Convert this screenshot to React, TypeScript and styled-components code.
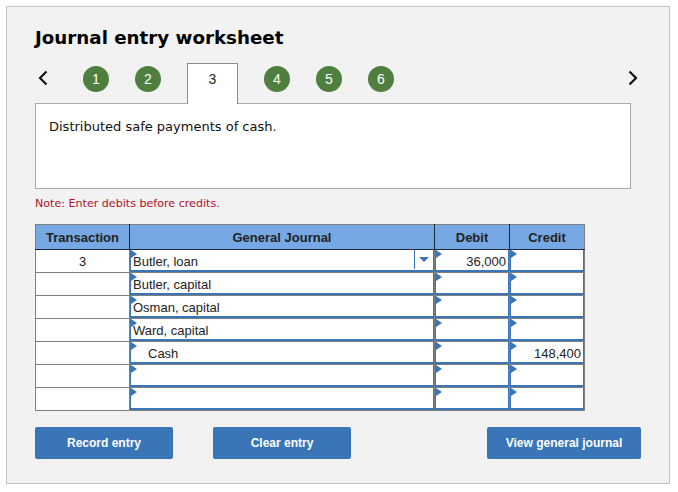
import styled, { createGlobalStyle } from 'styled-components';

const rows = [
  { transaction: '3', account: 'Butler, loan', debit: '36,000', credit: '', select: true },
  { transaction: '', account: 'Butler, capital', debit: '', credit: '' },
  { transaction: '', account: 'Osman, capital', debit: '', credit: '' },
  { transaction: '', account: 'Ward, capital', debit: '', credit: '' },
  { transaction: '', account: 'Cash', debit: '', credit: '148,400', indent: true },
  { transaction: '', account: '', debit: '', credit: '' },
  { transaction: '', account: '', debit: '', credit: '' },
];

function Chevron({ flip }: { flip?: boolean }) {
  return (
    <svg width="12" height="18" viewBox="0 0 12 18">
      <path
        d={flip ? 'M2.5 2.5L9 9l-6.5 6.5' : 'M9.5 2.5L3 9l6.5 6.5'}
        fill="none"
        stroke="#111"
        strokeWidth="2.2"
      />
    </svg>
  );
}

function App() {
  return (
    <>
      <GlobalStyle />
      <Panel>
        <Title>Journal entry worksheet</Title>
        <TabRow>
          <ArrowButton>
            <Chevron />
          </ArrowButton>
          <Steps>
            <Step>1</Step>
            <Step>2</Step>
            <ActiveStep>3</ActiveStep>
            <Step>4</Step>
            <Step>5</Step>
            <Step>6</Step>
          </Steps>
          <ArrowButton>
            <Chevron flip />
          </ArrowButton>
        </TabRow>
        <Description>Distributed safe payments of cash.</Description>
        <Note>Note: Enter debits before credits.</Note>
        <Table>
          <colgroup>
            <col width="94" />
            <col width="305" />
            <col width="75" />
            <col width="75" />
          </colgroup>
          <thead>
            <tr>
              <Th>Transaction</Th>
              <Th>General Journal</Th>
              <Th>Debit</Th>
              <Th>Credit</Th>
            </tr>
          </thead>
          <tbody>
            {rows.map((row, i) => (
              <tr key={i}>
                <PlainCell>{row.transaction}</PlainCell>
                <InputCell>
                  <Field $indent={row.indent}>
                    <Marker />
                    {row.account}
                    {row.select && (
                      <SelectArrow>
                        <Caret />
                      </SelectArrow>
                    )}
                  </Field>
                </InputCell>
                <InputCell>
                  <Field $right>
                    <Marker />
                    {row.debit}
                  </Field>
                </InputCell>
                <InputCell>
                  <Field $right>
                    <Marker />
                    {row.credit}
                  </Field>
                </InputCell>
              </tr>
            ))}
          </tbody>
        </Table>
        <Actions>
          <ActionGroup>
            <ActionButton $width={138}>Record entry</ActionButton>
            <ActionButton $width={138}>Clear entry</ActionButton>
          </ActionGroup>
          <ActionButton $width={154}>View general journal</ActionButton>
        </Actions>
      </Panel>
    </>
  );
}

const GlobalStyle = createGlobalStyle`
  body {
    margin: 6px;
    background: #fff;
    font-family: 'Liberation Sans', Arial, sans-serif;
  }
`;

const Panel = styled.div`
  box-sizing: border-box;
  width: 664px;
  height: 478px;
  padding: 18px 28px 0;
  background: #f2f2f2;
  border: 1px solid #c4c4c4;
`;

const Title = styled.h1`
  margin: 0;
  font: bold 18.25px/26px 'DejaVu Sans', Verdana, sans-serif;
  color: #000;
`;

const TabRow = styled.div`
  display: flex;
  align-items: center;
  justify-content: space-between;
  height: 40px;
  margin-top: 12px;
  width: 604px;
`;

const ArrowButton = styled.div`
  display: flex;
  margin-top: -10px;
  padding-left: 2px;
`;

const Steps = styled.div`
  display: flex;
  align-items: flex-start;
  gap: 26px;
  height: 100%;
  margin-right: 197px;
`;

const Step = styled.div`
  width: 26px;
  height: 26px;
  margin-top: 3px;
  border-radius: 50%;
  background: #4f7f3f;
  color: #fff;
  font-size: 14px;
  line-height: 26px;
  text-align: center;
`;

const ActiveStep = styled.div`
  position: relative;
  z-index: 1;
  box-sizing: border-box;
  width: 51px;
  height: 41px;
  padding-top: 6px;
  background: #fff;
  border: 1px solid #8c8c8c;
  border-bottom: none;
  color: #222;
  font-size: 14px;
  line-height: 18px;
  text-align: center;
`;

const Description = styled.div`
  box-sizing: border-box;
  width: 596px;
  height: 86px;
  padding: 14px 13px;
  background: #fff;
  border: 1px solid #aaa;
  font: 13px/18px 'DejaVu Sans', Verdana, sans-serif;
  color: #111;
`;

const Note = styled.div`
  margin-top: 8px;
  font: 11.1px/14px 'DejaVu Sans', Verdana, sans-serif;
  color: #b0112b;
`;

const Table = styled.table`
  table-layout: fixed;
  width: 549px;
  margin-top: 13px;
  border-collapse: collapse;
  background: #fff;
  border: 1px solid #7f7f7f;
  font-size: 13px;
  color: #222;
`;

const Th = styled.th`
  height: 24px;
  padding: 0;
  background: #76a9e3;
  border-left: 1px solid #1f2a38;
  border-bottom: 1px solid #1f2a38;
  font-size: 13px;
  font-weight: bold;
  color: #222;
  &:first-child {
    border-left: none;
  }
`;

const PlainCell = styled.td`
  height: 22px;
  padding: 0;
  border: 1px solid #7f7f7f;
  text-align: center;
`;

const InputCell = styled.td`
  height: 22px;
  padding: 0;
  border: 1px solid #7f7f7f;
`;

const Field = styled.div<{ $indent?: boolean; $right?: boolean }>`
  position: relative;
  box-sizing: border-box;
  height: 22px;
  padding: 1px 2px 0 ${(p) => (p.$indent ? '17px' : '2px')};
  border-left: 1px solid #3a75b8;
  border-right: 1px solid #3a75b8;
  border-bottom: 2px solid #3a75b8;
  line-height: 21px;
  text-align: ${(p) => (p.$right ? 'right' : 'left')};
`;

const Marker = styled.span`
  position: absolute;
  left: 0;
  top: 0;
  width: 0;
  height: 0;
  border-top: 4px solid transparent;
  border-bottom: 4px solid transparent;
  border-left: 6px solid #3a75b8;
`;

const SelectArrow = styled.span`
  position: absolute;
  right: 0;
  top: 0;
  display: flex;
  align-items: center;
  justify-content: center;
  width: 18px;
  height: 19px;
  border-left: 1px solid #3a75b8;
`;

const Caret = styled.span`
  width: 0;
  height: 0;
  border-left: 5px solid transparent;
  border-right: 5px solid transparent;
  border-top: 5px solid #3a75b8;
`;

const Actions = styled.div`
  display: flex;
  justify-content: space-between;
  width: 606px;
  margin-top: 16px;
`;

const ActionGroup = styled.div`
  display: flex;
  gap: 40px;
`;

const ActionButton = styled.button<{ $width: number }>`
  width: ${(p) => p.$width}px;
  height: 32px;
  padding: 0;
  background: #3a75b8;
  border: none;
  border-radius: 2px;
  color: #fff;
  font: bold 12px 'Liberation Sans', Arial, sans-serif;
`;

export default App;
